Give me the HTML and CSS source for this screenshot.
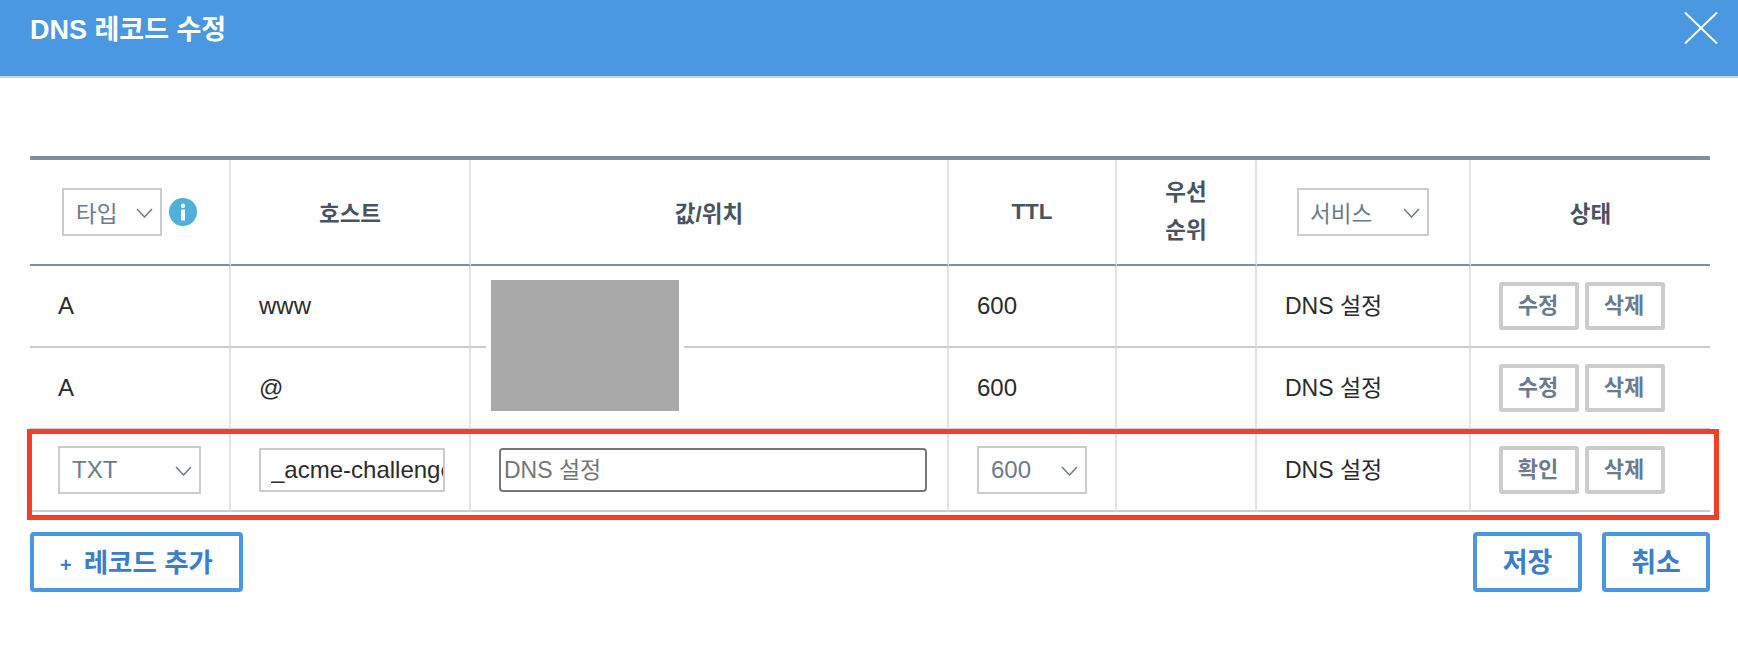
FILE: index.html
```html
<!DOCTYPE html>
<html lang="ko">
<head>
<meta charset="utf-8">
<title>DNS 레코드 수정</title>
<link rel="stylesheet" href="styles.css">
</head>
<body>
<header class="modal-head">
  <h1 class="modal-title">DNS 레코드 수정</h1>
  <button class="close" aria-label="닫기"><svg width="34" height="32" viewBox="0 0 34 32"><path d="M1 0.5 33 31.5M33 0.5 1 31.5" fill="none" stroke="#fff" stroke-width="2"/></svg></button>
</header>
<main class="modal-body">
  <div class="table-wrap">
    <table class="records">
      <colgroup>
        <col class="c1"><col class="c2"><col class="c3"><col class="c4"><col class="c5"><col class="c6"><col class="c7">
      </colgroup>
      <thead>
        <tr>
          <th>
            <div class="type-head">
              <div class="sel sel-type"><span class="ko">타입</span><svg class="chev" width="17" height="10" viewBox="0 0 17 10"><path d="M1 1 8.5 9 16 1" fill="none" stroke="#6b7b8c" stroke-width="1.5"/></svg></div>
              <svg class="info" width="28" height="28" viewBox="0 0 28 28"><circle cx="14" cy="14" r="14" fill="#4fb0dc"/><rect x="11.8" y="5.5" width="4.4" height="4.4" rx="2.2" fill="#fff"/><rect x="12" y="11.5" width="4" height="11" fill="#fff"/></svg>
            </div>
          </th>
          <th>호스트</th>
          <th>값/위치</th>
          <th>TTL</th>
          <th class="prio">우선<br>순위</th>
          <th>
            <div class="sel sel-svc"><span class="ko">서비스</span><svg class="chev" width="17" height="10" viewBox="0 0 17 10"><path d="M1 1 8.5 9 16 1" fill="none" stroke="#6b7b8c" stroke-width="1.5"/></svg></div>
          </th>
          <th>상태</th>
        </tr>
      </thead>
      <tbody>
        <tr>
          <td>A</td><td>www</td><td></td><td>600</td><td></td><td class="dns">DNS 설정</td>
          <td class="act-cell"><div class="actions"><button class="act">수정</button><button class="act">삭제</button></div></td>
        </tr>
        <tr>
          <td>A</td><td>@</td><td></td><td>600</td><td></td><td class="dns">DNS 설정</td>
          <td class="act-cell"><div class="actions"><button class="act">수정</button><button class="act">삭제</button></div></td>
        </tr>
        <tr>
          <td class="ctl"><div class="sel sel-rec"><span>TXT</span><svg class="chev" width="17" height="10" viewBox="0 0 17 10"><path d="M1 1 8.5 9 16 1" fill="none" stroke="#6b7b8c" stroke-width="1.5"/></svg></div></td>
          <td class="ctl"><input class="host-input" type="text" value="_acme-challenge"></td>
          <td class="ctl"><input class="value-input" type="text" placeholder="DNS 설정"></td>
          <td class="ctl"><div class="sel sel-ttl"><span>600</span><svg class="chev" width="17" height="10" viewBox="0 0 17 10"><path d="M1 1 8.5 9 16 1" fill="none" stroke="#6b7b8c" stroke-width="1.5"/></svg></div></td>
          <td></td>
          <td class="dns">DNS 설정</td>
          <td class="act-cell"><div class="actions"><button class="act">확인</button><button class="act">삭제</button></div></td>
        </tr>
      </tbody>
    </table>
    <div class="redact"></div>
    <div class="highlight"></div>
  </div>
  <div class="foot">
    <button class="btn btn-add"><span class="plus">+</span>레코드 추가</button>
    <div class="foot-right">
      <button class="btn btn-save">저장</button>
      <button class="btn btn-cancel">취소</button>
    </div>
  </div>
</main>
</body>
</html>
```
FILE: styles.css
```css
* { box-sizing: border-box; }
html, body { margin: 0; background: #fff; }
body {
  font-family: "Liberation Sans", "Noto Sans CJK KR", sans-serif;
  color: #2b2b2b;
  overflow: hidden;
}
button { font-family: inherit; cursor: pointer; }

.modal-head {
  height: 78px;
  background: #4a97e2;
  border-bottom: 2px solid #cfd3d8;
  display: flex;
  justify-content: space-between;
  align-items: flex-start;
  padding: 12px 20px 0 30px;
}
.modal-title {
  margin: 0;
  font-size: 27px;
  line-height: 36px;
  font-weight: 700;
  color: #fff;
}
.close {
  background: none;
  border: 0;
  padding: 0;
  width: 34px;
  height: 32px;
  display: block;
}
.close svg { display: block; }

.modal-body { padding: 78px 28px 0 30px; }
.table-wrap { position: relative; }

.records {
  width: 1680px;
  table-layout: fixed;
  border-collapse: separate;
  border-spacing: 0;
  border-top: 4px solid #7f8fa0;
  font-size: 24px;
}
.c1 { width: 201px; }
.c2 { width: 240px; }
.c3 { width: 478px; }
.c4 { width: 168px; }
.c5 { width: 140px; }
.c6 { width: 214px; }
.c7 { width: 239px; }

.records th {
  height: 106px;
  border-right: 2px solid #e2e2e2;
  border-bottom: 2px solid #7f8fa0;
  font-size: 22.5px;
  font-weight: 700;
  color: #4a5360;
  text-align: center;
  padding: 0;
}
.records td {
  height: 82px;
  border-right: 2px solid #e2e2e2;
  border-bottom: 2px solid #cccccc;
  padding: 0 0 1px 28px;
}
.records th:last-child, .records td:last-child { border-right: 0; }
.records td.ctl, .records td.act-cell { padding: 0 0 0 28px; }
.records td.dns { font-size: 23px; padding-bottom: 5px; }
.prio { line-height: 38px; }

.type-head {
  display: flex;
  align-items: center;
  gap: 7px;
  padding-left: 32px;
}
.info { display: block; }

.sel {
  display: flex;
  align-items: center;
  justify-content: space-between;
  height: 48px;
  border: 2px solid #cccccc;
  background: #fff;
  color: #6b7b8c;
  font-size: 24px;
  font-weight: 400;
  padding: 0 7px 0 12px;
}
.sel .ko { font-size: 22.5px; }
.sel-type { width: 100px; }
.sel-svc { width: 132px; margin-left: 40px; padding-right: 7px; padding-left: 11px; }
.sel-rec { width: 143px; }
.sel-ttl { width: 110px; }
.chev { flex: none; margin-top: 2px; }

.host-input, .value-input {
  display: block;
  height: 44px;
  font-family: inherit;
  font-size: 24px;
  background: #fff;
  outline: 0;
}
.host-input {
  width: 186px;
  border: 2px solid #cccccc;
  padding: 0 0 0 10px;
  color: #2b2b2b;
}
.value-input {
  width: 428px;
  border: 2px solid #767676;
  border-radius: 4px;
  padding: 0 0 0 3px;
  font-size: 23px;
}
.value-input::placeholder { color: #757575; opacity: 1; }

.actions { display: flex; gap: 6px; }
.act {
  width: 80px;
  height: 48px;
  border: 4px solid #cccccc;
  border-radius: 3px;
  background: #fff;
  color: #6b7b8c;
  font-size: 22px;
  font-weight: 700;
  padding: 0 2px 7px 0;
}

.redact {
  position: absolute;
  left: 456px;
  top: 124px;
  width: 198px;
  height: 131px;
  background: #a9a9a9;
  background-clip: padding-box;
  border: solid #fff;
  border-width: 0 5px;
}
.highlight {
  position: absolute;
  left: -3px;
  top: 273px;
  width: 1692px;
  height: 91px;
  border: 5px solid #ef4123;
  pointer-events: none;
}

.foot {
  display: flex;
  justify-content: space-between;
  margin-top: 20px;
}
.foot-right { display: flex; gap: 20px; }
.btn {
  height: 60px;
  border: 4px solid #4a97e2;
  border-radius: 4px;
  background: #fff;
  color: #3a7fc8;
  font-size: 27px;
  font-weight: 700;
  padding: 0 0 4px;
}
.btn-add { width: 213px; font-size: 26.5px; }
.btn-save { width: 109px; }
.btn-cancel { width: 108px; }
.plus { font-size: 20px; margin-right: 12px; }
```
